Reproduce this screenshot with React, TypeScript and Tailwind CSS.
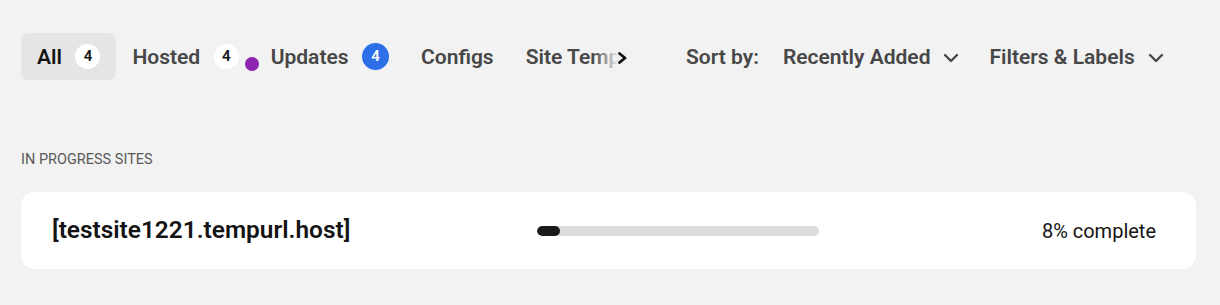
import React from 'react';
import { ChevronDown } from 'lucide-react';

interface Tab {
  label: string;
  count?: number;
  badge?: 'white' | 'blue';
  dot?: boolean;
  active?: boolean;
}

const tabs: Tab[] = [
  { label: 'All', count: 4, badge: 'white', active: true },
  { label: 'Hosted', count: 4, badge: 'white', dot: true },
  { label: 'Updates', count: 4, badge: 'blue' },
  { label: 'Configs' },
  { label: 'Site Templates' },
];

const TabItem: React.FC<{ tab: Tab }> = ({ tab }) => {
  return (
    <div
      className={
        'relative flex h-[47px] shrink-0 items-center gap-[13.5px] rounded-[7px] px-4 ' +
        (tab.active ? 'bg-[#e5e5e5] text-[#141414]' : 'text-[#474747]')
      }
    >
      <span className="pt-[2px] text-[21px] font-semibold leading-none whitespace-nowrap">{tab.label}</span>
      {tab.count !== undefined && (
        <span
          className={
            tab.badge === 'blue'
              ? 'flex h-[27px] w-[27px] items-center justify-center rounded-full bg-[#2c6fe9] text-[15px] font-semibold text-white'
              : 'flex h-[25px] w-[25px] items-center justify-center rounded-full bg-white text-[15px] font-semibold text-[#141414]'
          }
        >
          {tab.count}
        </span>
      )}
      {tab.dot && (
        <span className="absolute right-[-4px] top-[24px] h-[14px] w-[14px] rounded-full bg-[#8e26b0]" />
      )}
    </div>
  );
};

const App: React.FC = () => {
  const progress = 8;
  return (
    <div
      className="min-h-[305px] w-full bg-[#f2f2f2] pl-[21px] pr-[24px] pt-[33px]"
      style={{ fontFamily: 'Roboto, "Liberation Sans", sans-serif' }}
    >
      <div className="flex items-center">
        <div className="relative w-[607px] overflow-hidden">
          <div className="flex">
            {tabs.map((tab) => (
              <TabItem key={tab.label} tab={tab} />
            ))}
          </div>
          <div className="absolute inset-y-0 right-0 flex items-center">
            <div className="h-full w-[24px] bg-gradient-to-r from-[#f2f2f2]/0 to-[#f2f2f2]/90" />
            <div className="flex h-full items-center bg-[#f2f2f2] pt-[2px]">
              <svg width="11" height="12" viewBox="0 0 11 12" fill="none">
                <path d="M2.5 1.5 L8 6 L2.5 10.5" stroke="#111" strokeWidth="2.8" strokeLinecap="round" strokeLinejoin="round" />
              </svg>
            </div>
          </div>
        </div>

        <div className="ml-[58px] flex items-center pt-[2px] text-[21px] font-semibold text-[#474747]">
          <span>Sort by:</span>
          <button className="ml-[24px] flex items-center gap-[9px] font-semibold">
            Recently Added
            <ChevronDown size={24} strokeWidth={2.4} />
          </button>
          <button className="ml-[26px] flex items-center gap-[9px] font-semibold">
            Filters &amp; Labels
            <ChevronDown size={24} strokeWidth={2.4} />
          </button>
        </div>
      </div>

      <div className="mt-[72px] text-[14.5px] uppercase leading-4 text-[#595959]">In progress sites</div>

      <div className="mt-[24px] flex h-[77px] items-center rounded-[14px] bg-white pl-[31px] pr-[40px]">
        <div className="w-[485px] text-[24.4px] font-semibold text-[#141414]">[testsite1221.tempurl.host]</div>
        <div className="h-[10px] w-[282px] overflow-hidden rounded-full bg-[#dcdcdc]">
          <div className="h-full rounded-full bg-[#1a1a1a]" style={{ width: `${progress}%` }} />
        </div>
        <div className="ml-auto text-[20px] text-[#141414]">{progress}% complete</div>
      </div>
    </div>
  );
};

export default App;
